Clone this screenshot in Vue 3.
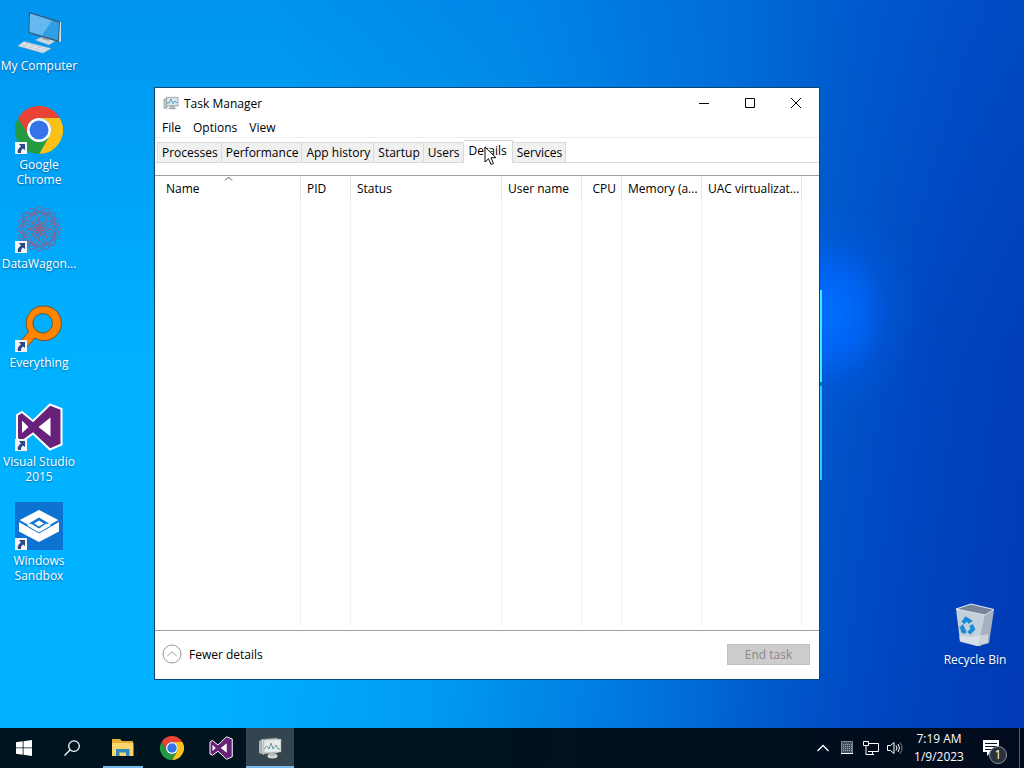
<template>
    <div class="desktop">
        <svg class="symbols" aria-hidden="true">
            <symbol id="chrome" viewBox="0 0 48 48">
                <path fill="#ea4335" d="M24 12H44.8A24 24 0 0 0 3.2 12L13.6 30A12 12 0 0 1 24 12z" />
                <path fill="#fbc116" d="M34.4 30L24 48A24 24 0 0 0 44.8 12H24A12 12 0 0 1 34.4 30z" />
                <path fill="#249a41" d="M13.6 30L3.2 12A24 24 0 0 0 24 48L34.4 30A12 12 0 0 1 13.6 30z" />
                <circle cx="24" cy="24" r="12" fill="#fff" />
                <circle cx="24" cy="24" r="9.5" fill="#3474e8" />
            </symbol>
            <symbol id="studio" viewBox="0 0 48 48">
                <path fill="#68217a" stroke="#fff" stroke-width="2" d="M2 12L7 9L18 18L35 1.500L46.500 6V41.500L35 46.500L18 30.500L7 38.500L2 36z" />
                <path fill="#fff" d="M7 17.500L13.500 24L7 30zM35.500 14.500V33.500L23.500 24z" />
            </symbol>
            <symbol id="computer" viewBox="0 0 48 48">
                <path fill="#c9d8e2" stroke="#93a8b8" stroke-width=".5" d="M20 33L27 30L40 34L34 38z" />
                <path fill="#8fa5b5" d="M27 28L34 30V34L27 32z" />
                <path fill="#dfe7ec" stroke="#a9b8c2" stroke-width=".5" d="M3 39L9 34.500L36 41.500L28 46z" />
                <path fill="none" stroke="#b4c2ca" stroke-width=".7" d="M7 38L31 44.500M10 36L33 42.500M14 35.500L8 40M20 37L14 42M26 39L20 43.500" />
                <path fill="#3d5568" d="M14 5L45 14.500L44 35L13.500 26z" />
                <path fill="#d0dce5" d="M45 14.500L46 15V34.500L44 35z" />
                <path fill="#2f9fe6" d="M15 6.500L44 15.500L43 33.500L14.500 25z" />
                <path fill="#7cc4f1" d="M15 6.500L37 13.500L27 28.500L14.500 25z" opacity=".7" />
            </symbol>
            <symbol id="wagon" viewBox="0 0 48 48">
                <g fill="none" stroke="#6f6da2" stroke-width=".9">
                    <rect v-for="n in 4" :key="n" x="8" y="8" width="32" height="32" :transform="`rotate(${n * 22.5} 24 24)`" />
                    <ellipse v-for="n in 8" :key="'e' + n" cx="24" cy="12" rx="5" ry="10" :transform="`rotate(${n * 45} 24 24)`" />
                    <ellipse v-for="n in 8" :key="'i' + n" cx="24" cy="15" rx="4" ry="8" stroke="#965f83" :transform="`rotate(${n * 45 + 22.5} 24 24)`" />
                </g>
            </symbol>
            <symbol id="everything" viewBox="0 0 48 48">
                <path fill="#ff8500" stroke="#77502a" d="M28.700 2A17.300 17.300 0 1 1 20 34L9 46L3 40L13.500 28A17.300 17.300 0 0 1 28.700 2zM28.700 9.500A9.800 9.800 0 1 0 28.700 29A9.800 9.800 0 0 0 28.700 9.500z" />
            </symbol>
            <symbol id="sandbox" viewBox="0 0 48 48">
                <rect width="48" height="48" fill="#0d73d2" />
                <path fill="#fff" d="M4 20L24 31.500L44 20V29.500L24 40L4 29.500z" />
                <path fill="#fff" stroke="#0d73d2" stroke-width="1.500" d="M24 7L45 18L24 30L3 18z" />
                <path fill="#0d73d2" d="M24 15.500L34 21.500L24 27.500L14 21.500z" />
                <path fill="#fff" d="M24 18.500L29 21.500L24 24.500L19 21.500zM24 26L31 21.500L36 23.500L24 30.500L12 23.500L17 21.500z" />
                <path fill="#0d73d2" d="M24 18L18 21.500L24 25L30 21.500L31 21.500L24 26.500L16 21.500L24 16.500z" />
            </symbol>
            <symbol id="bin" viewBox="0 0 48 48">
                <path fill="#c6d0db" d="M5 8L34 14L30 45L26 45L9 40z" />
                <path fill="#a5b0be" d="M34 14L43 9L38 42L27 45z" />
                <path fill="#e6e9ec" d="M8 35L21 36L37 33L37 42L26 45L9 41z" opacity=".6" />
                <path fill="#77859b" stroke="#e4eaf0" d="M5 8L20 3L43 8.500L34 14z" />
                <path fill="none" stroke="#168bd8" stroke-width="4" d="M12 22L15 18L18 20M20 24L22 28L19 31M15 31L12 30L11 26" />
                <path fill="#168bd8" d="M17 17L22 20L17 23zM20 28V34L16 31zM8 27L12 23L14 28z" />
            </symbol>
            <symbol id="monitor" viewBox="0 0 24 24">
                <path fill="#c5cccb" stroke="#8a9496" d="M1.500 6H6V20H1.500z" />
                <path fill="#d8dfdf" stroke="#7e8a8e" d="M5 3.500H22.500V16.500H5zM11 17H17V20H11zM8 20.500H20" />
                <path fill="#d6edf6" d="M7 5.500H20.500V14.500H7z" />
                <path fill="none" stroke="#4a8aa8" stroke-width="1.300" d="M6 12H9L12 6L15 13L18 9L21 12" />
            </symbol>
        </svg>

        <main class="workspace">
            <nav class="icon-column">
                <a v-for="item in shortcuts" :key="item.icon" class="icon" href="#" @click.prevent>
                    <span class="picture">
                        <svg class="large"><use :href="'#' + item.icon" /></svg>
                        <svg v-if="item.link" class="arrow" viewBox="0 0 12 12">
                            <rect width="12" height="12" fill="#f4f4f8" />
                            <path fill="#294a86" d="M4 2H10V8L8 6.500C6 8 6 9 6 11H3C2 8 4 6 6 4.500z" />
                        </svg>
                    </span>
                    <span>{{ item.label }}</span>
                </a>
            </nav>
            <div class="light-edge"></div>
            <a class="icon bin" href="#" @click.prevent>
                <span class="picture"><svg class="large"><use href="#bin" /></svg></span>
                <span>Recycle Bin</span>
            </a>

            <section class="window">
                <header class="title-bar">
                    <svg class="small"><use href="#monitor" /></svg>
                    <span class="title">Task Manager</span>
                    <button type="button" aria-label="Minimize">
                        <svg viewBox="0 0 12 12"><path d="M1 6.500H11" /></svg>
                    </button>
                    <button type="button" aria-label="Maximize">
                        <svg viewBox="0 0 12 12"><path d="M1.500 1.500H10.500V10.500H1.500z" /></svg>
                    </button>
                    <button type="button" aria-label="Close">
                        <svg viewBox="0 0 12 12"><path d="M1 1L11 11M11 1L1 11" /></svg>
                    </button>
                </header>
                <div class="menu">
                    <button v-for="item in menu" :key="item" type="button">{{ item }}</button>
                </div>
                <div class="tabs" role="tablist">
                    <button v-for="tab in tabs" :key="tab" type="button" role="tab" :aria-selected="tab == active" :class="{ active: tab == active }" @click="active = tab">{{ tab }}</button>
                </div>
                <div class="list">
                    <table>
                        <colgroup>
                            <col v-for="col in columns" :key="col.label" :class="col.size">
                            <col>
                        </colgroup>
                        <thead>
                            <tr>
                                <th v-for="col in columns" :key="col.label" :class="{ number: col.label == 'CPU' }">
                                    {{ col.label }}
                                    <svg v-if="col.label == 'Name'" class="sort" viewBox="0 0 9 5"><path d="M1 4.500L4.500 1L8 4.500" /></svg>
                                </th>
                                <th></th>
                            </tr>
                        </thead>
                        <tbody>
                            <tr>
                                <td v-for="col in columns" :key="col.label"></td>
                                <td></td>
                            </tr>
                        </tbody>
                    </table>
                </div>
                <footer class="bottom">
                    <button type="button" class="fewer">
                        <svg viewBox="0 0 20 20"><circle cx="10" cy="10" r="9" /><path d="M5.500 12L10 7.500L14.500 12" /></svg>
                        Fewer details
                    </button>
                    <button type="button" class="end" disabled>End task</button>
                </footer>
            </section>

            <svg class="cursor" viewBox="0 0 13 20">
                <path fill="#fff" stroke="#111" d="M1 1V16L4.500 12.700L7 18.500L9.500 17.500L7 11.700H12z" />
            </svg>
        </main>

        <footer class="taskbar">
            <button type="button" aria-label="Start">
                <svg class="small" viewBox="0 0 16 16"><path fill="#fff" d="M0 2.300L6.700 1.300V7.500H0zM7.500 1.200L16 0V7.500H7.500zM0 8.300H6.700V14.700L0 13.700zM7.500 8.300H16V16L7.500 14.800z" /></svg>
            </button>
            <button type="button" aria-label="Search">
                <svg class="small" viewBox="0 0 16 16"><path fill="none" stroke="#fff" stroke-width="1.300" d="M6 10L.5 15.500M10 .8A5.300 5.300 0 1 1 10 11.400A5.300 5.300 0 1 1 10 .8z" /></svg>
            </button>
            <div class="apps">
                <button type="button" class="open" aria-label="File Explorer">
                    <svg class="medium" viewBox="0 0 24 24">
                        <path fill="#e8ad35" d="M1 3H9L11 5H22V20H1z" />
                        <path fill="#fbd66c" d="M1 7H22.500V20H1z" />
                        <path fill="#3289bd" d="M5 13H18.500V20H15V16.500H8.500V20H5z" />
                    </svg>
                </button>
                <button type="button" aria-label="Google Chrome"><svg class="medium"><use href="#chrome" /></svg></button>
                <button type="button" aria-label="Visual Studio"><svg class="medium"><use href="#studio" /></svg></button>
                <button type="button" class="open current" aria-label="Task Manager">
                    <svg class="medium" viewBox="0 0 24 24">
                        <path fill="#aeb5b4" d="M1 5L6 3V19L1 17z" />
                        <path fill="#cdd3d1" stroke="#808989" stroke-width=".5" d="M3 3.500L19 2L20 17L4 18z" />
                        <path fill="#e6ebea" stroke="#939b9b" stroke-width=".5" d="M6 4L23 3V16L6 17z" />
                        <path fill="none" stroke="#5a8c9e" stroke-width=".9" d="M6 13L9 10L11 13L13 7L15 13L18 9L20 13H22" />
                        <ellipse cx="14.500" cy="20" rx="5" ry="2.500" fill="#d8d8cf" />
                        <path fill="#b5bab4" d="M12 17H17V20H12z" />
                    </svg>
                </button>
            </div>
            <div class="tray">
                <svg viewBox="0 0 16 16"><path stroke-width="1.300" d="M2.500 11L8 5.500L13.500 11" /></svg>
                <svg viewBox="0 0 16 16">
                    <path fill="#46525e" stroke="#7d8791" d="M2.500 1.500H13.500V13.500H2.500z" />
                    <path stroke="#9aa4ae" stroke-dasharray="1 1" d="M4 4.500H13M4 6.500H13M4 8.500H13M4 10.500H13" />
                    <path stroke="#fff" d="M2 13.500H14" />
                </svg>
                <svg viewBox="0 0 16 16"><path d="M5 3.500H15.500V11.500H5M.5 1.500H5.500V5.500H.5zM3 5.500V14.500H11M9.500 11.500V14.500" /></svg>
                <svg viewBox="0 0 16 16">
                    <path d="M.5 5.500H3.500L7 2.500V13.500L3.500 10.500H.5zM9 5.500Q11 8 9 10.500M11 4Q14 8 11 12" />
                    <path stroke="#7b8590" d="M13 2.500Q17 8 13 13.500" />
                </svg>
            </div>
            <time class="clock" datetime="2023-01-09T07:19">
                <span>7:19 AM</span>
                <span>1/9/2023</span>
            </time>
            <button type="button" class="notice" aria-label="Notifications">
                <svg viewBox="0 0 18 18">
                    <path fill="#fff" d="M1 1H17V13H9L5 17V13H1z" />
                    <path stroke="#061225" d="M3 4.500H15M3 7.500H15M3 10.500H10" />
                </svg>
                <span class="badge">1</span>
            </button>
            <button type="button" class="peek" aria-label="Show desktop"></button>
        </footer>
    </div>
</template>

<script setup>
    import { ref } from "vue";

    let active = ref("Details");

    const shortcuts = [
        { label: "My Computer", icon: "computer" },
        { label: "Google Chrome", icon: "chrome", link: true },
        { label: "DataWagon...", icon: "wagon", link: true },
        { label: "Everything", icon: "everything", link: true },
        { label: "Visual Studio 2015", icon: "studio", link: true },
        { label: "Windows Sandbox", icon: "sandbox", link: true }
    ];

    const menu = ["File", "Options", "View"];
    const tabs = ["Processes", "Performance", "App history", "Startup", "Users", "Details", "Services"];

    const columns = [
        { label: "Name", size: "wide" },
        { label: "PID", size: "narrow" },
        { label: "Status", size: "wider" },
        { label: "User name", size: "normal" },
        { label: "CPU", size: "tiny" },
        { label: "Memory (a...", size: "normal" },
        { label: "UAC virtualizat...", size: "roomy" }
    ];
</script>

<style>
    body{
        margin: 0;
    }
</style>

<style scoped>
    .desktop{
        display: flex;
        flex-direction: column;
        height: 100vh;
        overflow: hidden;
        font-family: "Open Sans", "Noto Sans", sans-serif;
        font-size: 12px;
        line-height: 15px;
        color: #000;
    }
    .symbols{
        position: absolute;
        width: 0;
        height: 0;
    }
    svg{
        display: block;
        flex: none;
    }
    button{
        font: inherit;
        color: inherit;
        padding: 0;
        border: none;
        background: none;
    }
    .small{
        width: 16px;
        height: 16px;
    }
    .medium{
        width: 24px;
        height: 24px;
    }
    .large{
        width: 48px;
        height: 48px;
    }

    .workspace{
        position: relative;
        flex: 1;
        display: flex;
        justify-content: space-between;
        min-height: 0;
        background:
            radial-gradient(ellipse 90px 110px at 81% 43%, rgba(0, 110, 255, 1), rgba(0, 104, 255, 0.75) 35%, rgba(0, 96, 240, 0.25) 65%, rgba(0, 90, 230, 0)),
            linear-gradient(180deg, rgba(0, 92, 208, 0.35), rgba(0, 110, 220, 0) 50%),
            linear-gradient(97deg, #00b2ff 0%, #00b2ff 25%, #009cf2 46%, #0074dc 66%, #0052c8 80%, #0045c0 88%, #003ab4 100%);
    }
    .icon-column{
        display: flex;
        flex-direction: column;
        padding-top: 7px;
    }
    .icon{
        display: flex;
        flex-direction: column;
        align-items: center;
        gap: 3px;
        width: 78px;
        height: 99px;
        color: #fff;
        text-align: center;
        text-decoration: none;
        text-shadow: 0 1px 2px rgba(0, 30, 80, 0.5);
    }
    .picture{
        position: relative;
    }
    .arrow{
        position: absolute;
        left: 0;
        bottom: 0;
        width: 12px;
        height: 12px;
    }
    .bin{
        align-self: flex-end;
        height: 127px;
        margin-right: 10px;
    }
    .light-edge{
        position: absolute;
        top: 290px;
        right: 202px;
        width: 2px;
        height: 190px;
        background: linear-gradient(#45e6ff 0 92px, #0876b5 92px 96px, #2fcdf5 96px);
    }

    .window{
        position: absolute;
        top: 87px;
        right: 204px;
        bottom: 48px;
        left: 154px;
        display: flex;
        flex-direction: column;
        border: 1px solid #07477c;
        background: #fff;
    }
    .title-bar{
        display: flex;
        align-items: center;
        height: 30px;
        padding-left: 8px;
    }
    .title{
        flex: 1;
        padding-left: 5px;
    }
    .title-bar button{
        width: 46px;
        height: 30px;
    }
    .title-bar button svg{
        width: 12px;
        height: 12px;
        margin: auto;
        fill: none;
        stroke: #000;
    }
    .menu{
        display: flex;
        gap: 12px;
        height: 19px;
        padding-left: 7px;
        border-bottom: 1px solid #ececec;
    }
    .tabs{
        display: flex;
        align-items: flex-end;
        height: 24px;
        padding-left: 2px;
        border-bottom: 1px solid #d9d9d9;
    }
    .tabs button{
        height: 20px;
        padding: 0 3px 0 4px;
        border: 1px solid #d9d9d9;
        border-left-width: 0;
        border-bottom: none;
        background: #f0f0f0;
    }
    .tabs button:first-child{
        border-left-width: 1px;
    }
    .tabs .active{
        height: 23px;
        padding: 0 5px 3px;
        margin-bottom: -1px;
        background: #fff;
    }
    .list{
        flex: 1;
        display: flex;
        margin-top: 12px;
        padding-bottom: 4px;
        border-top: 1px solid #a0a0a0;
        border-bottom: 1px solid #a0a0a0;
    }
    table{
        width: 100%;
        table-layout: fixed;
        border-collapse: separate;
        border-spacing: 0;
    }
    .wide{
        width: 146px;
    }
    .wider{
        width: 151px;
    }
    .narrow{
        width: 50px;
    }
    .normal{
        width: 80px;
    }
    .tiny{
        width: 40px;
    }
    .roomy{
        width: 100px;
    }
    th{
        position: relative;
        height: 24px;
        padding: 0 0 0 6px;
        border-right: 1px solid #e5e5e5;
        font-weight: normal;
        text-align: left;
        white-space: nowrap;
    }
    th:first-child{
        padding-left: 11px;
    }
    th.number{
        padding: 0 5px 0 0;
        text-align: right;
    }
    td{
        padding: 0;
        border-right: 1px solid #f0f0f0;
    }
    th:last-child, td:last-child{
        border-right: none;
    }
    .sort{
        position: absolute;
        top: 0;
        left: calc(50% - 4px);
        width: 9px;
        height: 5px;
        fill: none;
        stroke: #555;
    }
    .bottom{
        display: flex;
        align-items: center;
        justify-content: space-between;
        height: 46px;
        padding: 0 9px 2px 7px;
    }
    .fewer{
        display: flex;
        align-items: center;
        gap: 7px;
    }
    .fewer svg{
        width: 20px;
        height: 20px;
        fill: none;
        stroke: #999;
    }
    .end{
        width: 83px;
        height: 21px;
        border: 1px solid #bfbfbf;
        background: #ccc;
        color: #888;
    }
    .cursor{
        position: absolute;
        top: 146px;
        left: 484px;
        width: 13px;
        height: 20px;
    }

    .taskbar{
        display: flex;
        align-items: center;
        height: 40px;
        color: #fff;
        background: linear-gradient(90deg, #001521, #001320 45%, #020b1d);
    }
    .taskbar > button, .apps button{
        display: flex;
        align-items: center;
        justify-content: center;
        width: 48px;
        height: 40px;
    }
    .apps{
        display: flex;
        flex: 1;
        gap: 1px;
        padding-left: 3px;
    }
    .apps button{
        position: relative;
    }
    .open::after{
        content: "";
        position: absolute;
        right: 4px;
        bottom: 0;
        left: 4px;
        height: 2px;
        background: #76b9ed;
    }
    .apps .current{
        background: #35454f;
    }
    .current::after{
        right: 0;
        left: 0;
    }
    .tray{
        display: flex;
        gap: 8px;
    }
    .tray svg{
        width: 16px;
        height: 16px;
        fill: none;
        stroke: #fff;
    }
    .clock{
        display: flex;
        flex-direction: column;
        width: 72px;
        line-height: 18px;
        text-align: center;
    }
    .taskbar .notice{
        position: relative;
        width: 44px;
        padding-right: 12px;
    }
    .notice svg{
        width: 18px;
        height: 18px;
    }
    .badge{
        position: absolute;
        right: 12px;
        bottom: 4px;
        width: 16px;
        height: 16px;
        border: 1px solid #8a929b;
        border-radius: 50%;
        background: #29313d;
        line-height: 16px;
    }
    .taskbar .peek{
        width: 5px;
        border-left: 1px solid #53606e;
    }
</style>
